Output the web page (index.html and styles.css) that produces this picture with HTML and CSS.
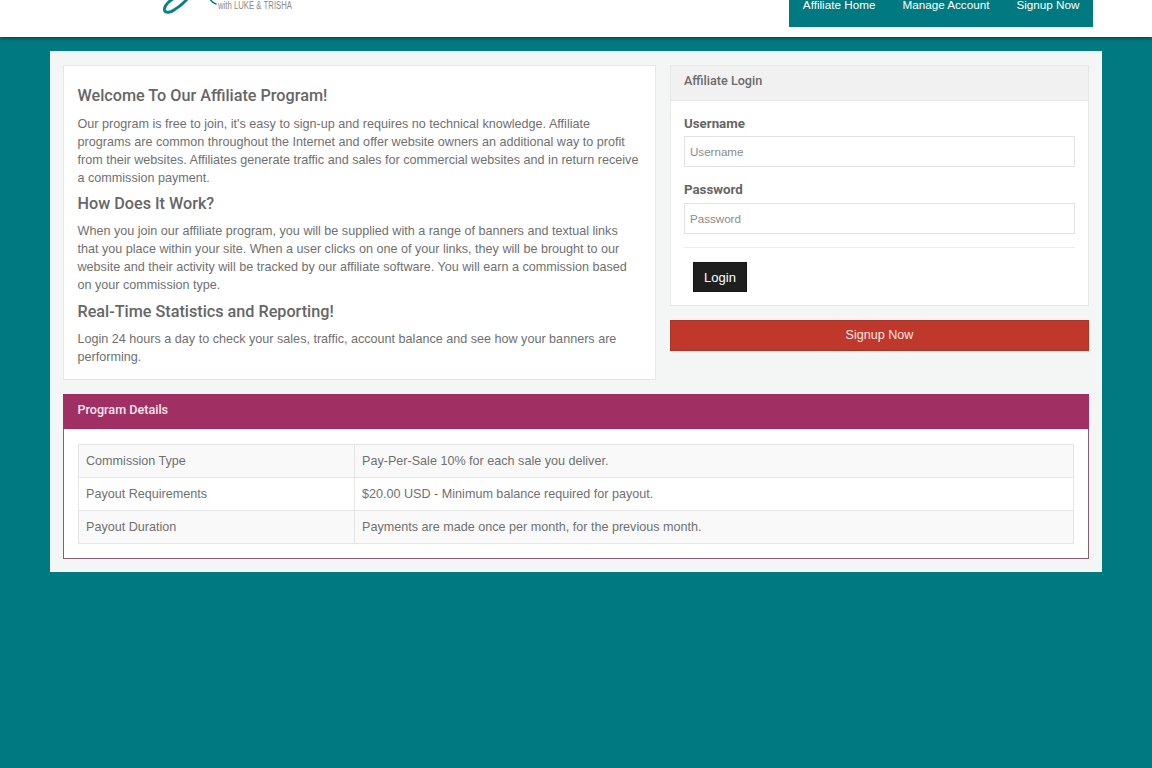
FILE: index.html
```html
<!DOCTYPE html>
<html lang="en">
<head>
<meta charset="utf-8">
<title>Affiliate Program</title>
<link rel="stylesheet" href="styles.css">
</head>
<body>
<header class="site-header">
  <div class="logo">
    <svg width="170" height="14" viewBox="0 0 170 14">
      <path class="swash" d="M22 -2 C16 2 12 6 12.500 10 C13 13 18 13 22 10 C27 7 32 3 36 -2" />
      <path class="swash-thin" d="M57 -2 C59 1 61 3 64 4" />
      <text x="66" y="9.300" class="logo-text" textLength="74" lengthAdjust="spacingAndGlyphs">with LUKE &amp; TRISHA</text>
    </svg>
  </div>
  <nav class="site-nav">
    <a href="#">Affiliate Home</a>
    <a href="#">Manage Account</a>
    <a href="#">Signup Now</a>
  </nav>
</header>

<main class="container">
  <div class="top-grid">
    <section class="card intro">
      <h3>Welcome To Our Affiliate Program!</h3>
      <p class="lead">Our program is free to join, it's easy to sign-up and requires no technical knowledge. Affiliate programs are common throughout the Internet and offer website owners an additional way to profit from their websites. Affiliates generate traffic and sales for commercial websites and in return receive a commission payment.</p>
      <h3>How Does It Work?</h3>
      <p>When you join our affiliate program, you will be supplied with a range of banners and textual links that you place within your site. When a user clicks on one of your links, they will be brought to our website and their activity will be tracked by our affiliate software. You will earn a commission based on your commission type.</p>
      <h3>Real-Time Statistics and Reporting!</h3>
      <p>Login 24 hours a day to check your sales, traffic, account balance and see how your banners are performing.</p>
    </section>
    <aside class="side">
      <section class="card login">
        <div class="card-heading">Affiliate Login</div>
        <form class="login-form">
          <label class="first" for="u">Username</label>
          <input id="u" type="text" placeholder="Username">
          <label for="p">Password</label>
          <input id="p" type="password" placeholder="Password">
          <hr>
          <button type="button" class="btn-login">Login</button>
        </form>
      </section>
      <a class="btn-signup" href="#">Signup Now</a>
    </aside>
  </div>

  <section class="details">
    <div class="details-heading">Program Details</div>
    <div class="details-body">
      <table>
        <tr><td class="key">Commission Type</td><td>Pay-Per-Sale 10% for each sale you deliver.</td></tr>
        <tr><td class="key">Payout Requirements</td><td>$20.00 USD - Minimum balance required for payout.</td></tr>
        <tr><td class="key">Payout Duration</td><td>Payments are made once per month, for the previous month.</td></tr>
      </table>
    </div>
  </section>
</main>
</body>
</html>
```
FILE: styles.css
```css
* { box-sizing: border-box; }
html, body { margin: 0; padding: 0; }
body {
  background: #007a80;
  font-family: "Liberation Sans", Arial, sans-serif;
  font-size: 12.600px;
  line-height: 18px;
  color: #707070;
  min-height: 768px;
}
.site-header {
  height: 37px;
  background: #fff;
  display: flex;
  justify-content: space-between;
  align-items: flex-start;
  padding: 0 59px 0 152px;
  box-shadow: 0 1px 4px rgba(0, 40, 45, .8);
  position: relative;
}
.logo svg { display: block; }
.swash { fill: none; stroke: #0d8086; stroke-width: 3; stroke-linecap: round; }
.swash-thin { fill: none; stroke: #0d8086; stroke-width: 1.6; stroke-linecap: round; }
.logo-text { font-family: "Liberation Sans", Arial, sans-serif; font-size: 10px; fill: #8a8a8a; }
.site-nav {
  display: flex;
  background: #007a80;
  height: 27px;
  padding: 0 13.500px 0 14px;
  gap: 27px;
  color: #fff;
}
.site-nav a {
  color: #fff;
  text-decoration: none;
  font-size: 11.700px;
  line-height: 10px;
}
.container {
  width: 1052px;
  margin: 14px 0 0 50px;
  padding: 14px 13px 13px;
  background: #f4f5f5;
}
.top-grid {
  display: grid;
  grid-template-columns: 593px 419px;
  gap: 14px;
}
.card {
  background: #fff;
  border: 1px solid #e7e7e7;
}
.intro { padding: 13px 14px 13px 13.500px; }
h3 {
  font-family: Roboto, "Liberation Sans", sans-serif;
  font-weight: 500;
  font-size: 16.200px;
  line-height: 20px;
  color: #666;
  margin: 0;
}
.intro h3:first-child { margin-top: 7px; }
.intro p { margin: 8px 0; }
.intro p.lead { margin: 9px 0 7px; }
.intro p:last-child { margin-bottom: 0; }
.side { display: flex; flex-direction: column; gap: 14px; }
.card-heading {
  height: 35px;
  padding: 0 13px;
  background: #f1f1f1;
  border-bottom: 1px solid #e7e7e7;
  font-family: Roboto, "Liberation Sans", sans-serif;
  font-weight: 500;
  font-size: 12.600px;
  line-height: 29px;
  color: #6b6b6b;
}
.login-form { padding: 14px 13px 13px; display: flex; flex-direction: column; align-items: flex-start; }
.login-form label {
  font-family: Roboto, "Liberation Sans", sans-serif;
  font-weight: 700;
  font-size: 13.300px;
  line-height: 18px;
  color: #666;
  margin-bottom: 4px;
}
.login-form label.first { margin-bottom: 3px; }
.login-form input {
  width: 100%;
  height: 31px;
  border: 1px solid #e2e2e2;
  padding: 0 5px;
  font-family: "Liberation Sans", Arial, sans-serif;
  font-size: 11.600px;
  margin-bottom: 14px;
  background: #fff;
}
.login-form input::placeholder { color: #8a8a8a; opacity: 1; }
.login-form hr {
  width: 100%;
  border: 0;
  border-top: 1px solid #ececec;
  margin: -1px 0 14px;
}
.btn-login {
  margin-left: 9px;
  width: 54px;
  height: 30px;
  background: #1f1f1f;
  border: 1px solid #151515;
  color: #fff;
  font-family: "Liberation Sans", Arial, sans-serif;
  font-size: 13px;
  padding: 0;
}
.btn-signup {
  display: block;
  height: 31px;
  background: #bf382c;
  border: 1px solid #ad3327;
  color: #f7e6e3;
  text-align: center;
  text-decoration: none;
  line-height: 29px;
}
.details {
  margin-top: 14px;
  background: #fff;
  border: 1px solid #8c5d79;
  border-top: 0;
}
.details-heading {
  height: 35px;
  margin: 0 -1px;
  padding: 0 14.500px;
  background: #a03064;
  color: #f6e6ee;
  font-family: Roboto, "Liberation Sans", sans-serif;
  font-weight: 500;
  font-size: 12.600px;
  line-height: 32px;
}
.details-body { padding: 15px 14px 14px; }
table {
  width: 100%;
  border-collapse: collapse;
  table-layout: fixed;
}
td {
  border: 1px solid #e5e5e5;
  height: 33px;
  padding: 0 7px;
}
td.key { width: 276px; }
tr:nth-child(odd) td { background: #f9f9f9; }
```
